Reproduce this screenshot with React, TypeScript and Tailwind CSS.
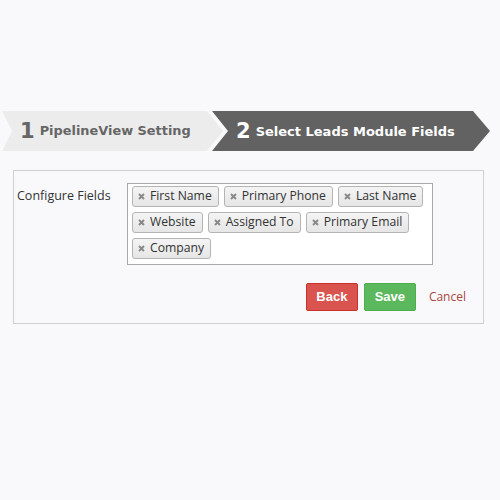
import React from "react";

const tags = [
  ["First Name", "Primary Phone", "Last Name"],
  ["Website", "Assigned To", "Primary Email"],
  ["Company"],
];

function XIcon() {
  return (
    <svg width="7" height="7" viewBox="0 0 7 7" className="shrink-0">
      <path d="M1 1 L6 6 M6 1 L1 6" stroke="#888" strokeWidth="1.9" strokeLinecap="butt" />
    </svg>
  );
}

function Tag({ label }: { label: string }) {
  return (
    <div className="flex h-[21px] items-center gap-[5px] whitespace-nowrap rounded-[3px] border border-[#b4b4b4] bg-gradient-to-b from-[#f4f4f4] to-[#e6e6e6] pl-[5px] pr-[6px] text-[12.2px] leading-none text-[#333]">
      <XIcon />
      <span>{label}</span>
    </div>
  );
}

export default function App() {
  return (
    <div
      className="min-h-[500px] w-[500px] bg-[#f9f9fb] px-[2px] pt-[111px]"
      style={{ fontFamily: '"Open Sans", "Liberation Sans", sans-serif' }}
    >
      <div className="flex h-[40px] whitespace-nowrap" style={{ fontFamily: '"DejaVu Sans", Verdana, sans-serif' }}>
        <div
          className="flex w-[221px] items-center bg-[#ececec] pl-[18px] text-[#666]"
          style={{ clipPath: "polygon(0 0, 205px 0, 221px 50%, 205px 100%, 0 100%, 10px 50%)" }}
        >
          <span className="text-[21px] font-bold leading-none">1</span>
          <span className="ml-[5px] text-[12.9px] font-bold leading-none">PipelineView Setting</span>
        </div>
        <div
          className="ml-[-11px] flex w-[278px] items-center bg-[#626262] pl-[24px] text-white"
          style={{ clipPath: "polygon(0 0, 261px 0, 278px 50%, 261px 100%, 0 100%, 16px 50%)" }}
        >
          <span className="text-[21px] font-bold leading-none">2</span>
          <span className="ml-[5px] text-[13px] font-bold leading-none">Select Leads Module Fields</span>
        </div>
      </div>

      <div className="ml-[11px] mt-[19px] w-[471px] border border-[#cfcfcf] pb-[12px] pl-[3px] pr-[17px] pt-[12px]">
        <div className="flex">
          <div className="w-[110px] whitespace-nowrap pt-[4px] text-[12.5px] leading-[18px] text-[#333]">Configure Fields</div>
          <div className="flex h-[82px] w-[306px] flex-col gap-[5px] border border-[#aaa] bg-white pl-[4px] pt-[2px]">
            {tags.map((row, i) => (
              <div key={i} className="flex gap-[5px]">
                {row.map((t) => (
                  <Tag key={t} label={t} />
                ))}
              </div>
            ))}
          </div>
        </div>
        <div className="mt-[18px] flex items-center justify-end">
          <button
            className="h-[28px] w-[52px] rounded-[2px] border border-[#c9302c] bg-[#d9534f] text-[13px] font-bold text-white"
            style={{ fontFamily: '"Liberation Sans", Arial, sans-serif' }}
          >
            Back
          </button>
          <button
            className="ml-[6px] h-[28px] w-[52px] rounded-[2px] border border-[#4cae4c] bg-[#5cb85c] text-[13px] font-bold text-white"
            style={{ fontFamily: '"Liberation Sans", Arial, sans-serif' }}
          >
            Save
          </button>
          <span className="ml-[13px] text-[12px] text-[#a94442]">Cancel</span>
        </div>
      </div>
    </div>
  );
}
